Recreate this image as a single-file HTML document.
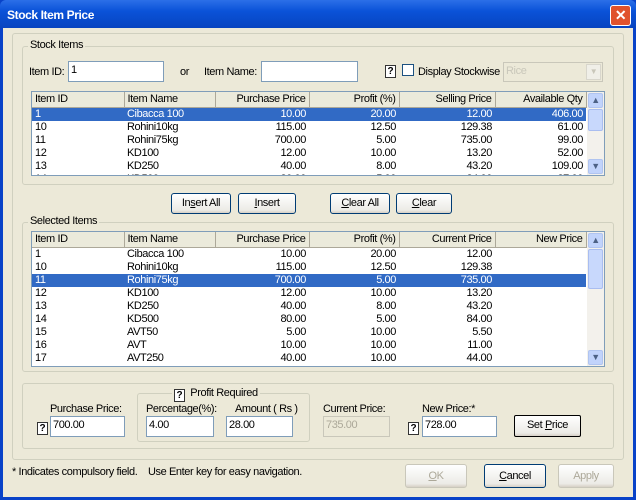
<!DOCTYPE html><html><head><style>
*{margin:0;padding:0;box-sizing:border-box}
body{width:636px;height:500px;overflow:hidden;background:#0842c8;font:11px "Liberation Sans",sans-serif;letter-spacing:-0.4px;color:#000;position:relative}
.a{position:absolute;white-space:nowrap}
#win{left:3px;top:0;width:630px;height:497px;background:#ece9d8}
#title{left:0;top:0;width:636px;height:28px;background:linear-gradient(#2b6fe8,#0a52d8 40%,#0744c0);border-radius:6px 6px 0 0;color:#fff;font-weight:bold;font-size:12px;padding:8px 0 0 7px}
#x{left:610px;top:5px;width:21px;height:21px;background:#e0522c;border:1px solid #fff;border-radius:3px;color:#fff;font-weight:bold;text-align:center;line-height:18px;font-size:14px}
.grp{position:absolute;border:1px solid #d0d0bf;border-radius:3px}
.lg{position:absolute;background:#ece9d8;padding:0 2px}
.inp{position:absolute;background:#fff;border:1px solid #7f9db9;padding:2px 2px;height:21px;white-space:nowrap}
.btn{position:absolute;border:1px solid #003c74;border-radius:3px;background:linear-gradient(#fff,#ecebe6 85%,#d6d0c5);text-align:center;line-height:19px}
.q{position:absolute;width:11px;height:13px;border:1px solid #333;background:#fff;font-size:10px;font-weight:bold;line-height:11px;text-align:center;letter-spacing:0}
.grid{position:absolute;background:#fff;border:1px solid #7f9db9;overflow:hidden}
.grid table{border-collapse:collapse;table-layout:fixed}
.grid th{font-weight:normal;height:15px;background:#ebeadb;border-right:1px solid #aca899;border-bottom:1px solid #aca899;padding:0 3px;white-space:nowrap;line-height:14px}
.grid td{height:13px;padding:0 3px;line-height:13px;white-space:nowrap}
.r{text-align:right}
tr.s td{background:#316ac5;color:#fff}
.sb{position:absolute;right:0;top:0;width:17px;bottom:0;background:#f3f1ec}
.ar{position:absolute;left:1px;width:15px;height:15px;background:#c1d3fb;border:1px solid #b0c4f0;border-radius:2px;color:#4d6185;font-size:9px;text-align:center;line-height:13px}
.th{position:absolute;left:1px;width:15px;background:#c8d8fc;border:1px solid #a9bdf0;border-radius:2px}
u{text-decoration:underline}
.dis{color:#aca899}
</style></head><body>
<div id="title" class="a">Stock Item Price</div>
<div id="x" class="a">✕</div>
<div id="win" class="a" style="top:28px;height:469px"></div>

<div class="grp" style="left:12px;top:33px;width:612px;height:427px"></div>
<div class="grp" style="left:22px;top:46px;width:592px;height:139px"></div>
<div class="lg" style="left:28px;top:39px">Stock Items</div>
<div class="a" style="left:29px;top:66px">Item ID:</div>
<div class="inp" style="left:68px;top:61px;width:96px">1</div>
<div class="a" style="left:180px;top:66px">or</div>
<div class="a" style="left:204px;top:66px">Item Name:</div>
<div class="inp" style="left:261px;top:61px;width:97px"></div>
<div class="q" style="left:385px;top:65px">?</div>
<div class="a" style="left:402px;top:64px;width:12px;height:12px;border:1px solid #1c5180;background:#fff"></div>
<div class="a" style="left:418px;top:66px">Display Stockwise</div>
<div class="inp" style="left:503px;top:62px;width:100px;height:20px;border-color:#c9c7ba;background:#ece9d8;color:#c9c7ba">Rice<div class="a" style="right:1px;top:1px;width:15px;height:16px;background:#f0efe8;border:1px solid #d8d6cc;color:#c9c7ba;font-size:8px;text-align:center;line-height:14px">▼</div></div>

<div class="grid" style="left:31px;top:91px;width:574px;height:85px">
<table><colgroup><col style="width:92px"><col style="width:91px"><col style="width:94px"><col style="width:90px"><col style="width:96px"><col style="width:91px"></colgroup>
<tr><th style="text-align:left">Item ID</th><th style="text-align:left">Item Name</th><th class="r">Purchase Price</th><th class="r">Profit (%)</th><th class="r">Selling Price</th><th class="r">Available Qty</th></tr>
<tr class="s"><td>1</td><td>Cibacca 100</td><td class="r">10.00</td><td class="r">20.00</td><td class="r">12.00</td><td class="r">406.00</td></tr>
<tr><td>10</td><td>Rohini10kg</td><td class="r">115.00</td><td class="r">12.50</td><td class="r">129.38</td><td class="r">61.00</td></tr>
<tr><td>11</td><td>Rohini75kg</td><td class="r">700.00</td><td class="r">5.00</td><td class="r">735.00</td><td class="r">99.00</td></tr>
<tr><td>12</td><td>KD100</td><td class="r">12.00</td><td class="r">10.00</td><td class="r">13.20</td><td class="r">52.00</td></tr>
<tr><td>13</td><td>KD250</td><td class="r">40.00</td><td class="r">8.00</td><td class="r">43.20</td><td class="r">109.00</td></tr>
<tr><td>14</td><td>KD500</td><td class="r">80.00</td><td class="r">5.00</td><td class="r">84.00</td><td class="r">87.00</td></tr>
</table>
<div class="sb"><div class="ar" style="top:1px">▲</div><div class="th" style="top:17px;height:22px"></div><div class="ar" style="bottom:1px">▼</div></div>
</div>

<div class="btn" style="left:171px;top:193px;width:60px;height:21px">In<u>s</u>ert All</div>
<div class="btn" style="left:238px;top:193px;width:58px;height:21px"><u>I</u>nsert</div>
<div class="btn" style="left:330px;top:193px;width:60px;height:21px"><u>C</u>lear All</div>
<div class="btn" style="left:396px;top:193px;width:56px;height:21px"><u>C</u>lear</div>

<div class="grp" style="left:22px;top:222px;width:592px;height:150px"></div>
<div class="lg" style="left:28px;top:215px">Selected Items</div>
<div class="grid" style="left:31px;top:231px;width:574px;height:136px">
<table><colgroup><col style="width:92px"><col style="width:91px"><col style="width:94px"><col style="width:90px"><col style="width:96px"><col style="width:91px"></colgroup>
<tr><th style="text-align:left">Item ID</th><th style="text-align:left">Item Name</th><th class="r">Purchase Price</th><th class="r">Profit (%)</th><th class="r">Current Price</th><th class="r">New Price</th></tr>
<tr><td>1</td><td>Cibacca 100</td><td class="r">10.00</td><td class="r">20.00</td><td class="r">12.00</td><td></td></tr>
<tr><td>10</td><td>Rohini10kg</td><td class="r">115.00</td><td class="r">12.50</td><td class="r">129.38</td><td></td></tr>
<tr class="s"><td>11</td><td>Rohini75kg</td><td class="r">700.00</td><td class="r">5.00</td><td class="r">735.00</td><td></td></tr>
<tr><td>12</td><td>KD100</td><td class="r">12.00</td><td class="r">10.00</td><td class="r">13.20</td><td></td></tr>
<tr><td>13</td><td>KD250</td><td class="r">40.00</td><td class="r">8.00</td><td class="r">43.20</td><td></td></tr>
<tr><td>14</td><td>KD500</td><td class="r">80.00</td><td class="r">5.00</td><td class="r">84.00</td><td></td></tr>
<tr><td>15</td><td>AVT50</td><td class="r">5.00</td><td class="r">10.00</td><td class="r">5.50</td><td></td></tr>
<tr><td>16</td><td>AVT</td><td class="r">10.00</td><td class="r">10.00</td><td class="r">11.00</td><td></td></tr>
<tr><td>17</td><td>AVT250</td><td class="r">40.00</td><td class="r">10.00</td><td class="r">44.00</td><td></td></tr>
<tr><td>18</td><td>AVT500</td><td class="r">80.00</td><td class="r">10.00</td><td class="r">88.00</td><td></td></tr>
</table>
<div class="sb"><div class="ar" style="top:1px">▲</div><div class="th" style="top:17px;height:40px"></div><div class="ar" style="bottom:1px">▼</div></div>
</div>

<div class="grp" style="left:22px;top:383px;width:592px;height:66px"></div>
<div class="grp" style="left:137px;top:393px;width:173px;height:49px"></div>
<div class="lg" style="left:172px;top:387px"><span class="q" style="position:relative;display:inline-block;top:2px">?</span>&nbsp; Profit Required</div>
<div class="a" style="left:50px;top:403px">Purchase Price:</div>
<div class="q" style="left:37px;top:422px">?</div>
<div class="inp" style="left:50px;top:416px;width:75px">700.00</div>
<div class="a" style="left:146px;top:403px">Percentage(%):</div>
<div class="inp" style="left:146px;top:416px;width:68px">4.00</div>
<div class="a" style="left:235px;top:403px">Amount ( Rs )</div>
<div class="inp" style="left:226px;top:416px;width:67px">28.00</div>
<div class="a" style="left:323px;top:403px">Current Price:</div>
<div class="inp" style="left:323px;top:416px;width:67px;border-color:#c9c7ba;background:#ece9d8;color:#aca899">735.00</div>
<div class="a" style="left:422px;top:403px">New Price:*</div>
<div class="q" style="left:408px;top:422px">?</div>
<div class="inp" style="left:422px;top:416px;width:75px">728.00</div>
<div class="btn" style="left:514px;top:415px;width:67px;height:22px;border-color:#000;border-radius:2px">Set <u>P</u>rice</div>

<div class="a" style="left:12px;top:466px">* Indicates compulsory field.&nbsp;&nbsp;&nbsp; Use Enter key for easy navigation.</div>
<div class="btn dis" style="left:405px;top:464px;width:62px;height:24px;border-color:#c9c7ba;line-height:22px"><u>O</u>K</div>
<div class="btn" style="left:484px;top:464px;width:62px;height:24px;line-height:22px"><u>C</u>ancel</div>
<div class="btn dis" style="left:558px;top:464px;width:56px;height:24px;border-color:#c9c7ba;line-height:22px">Apply</div>
</body></html>
